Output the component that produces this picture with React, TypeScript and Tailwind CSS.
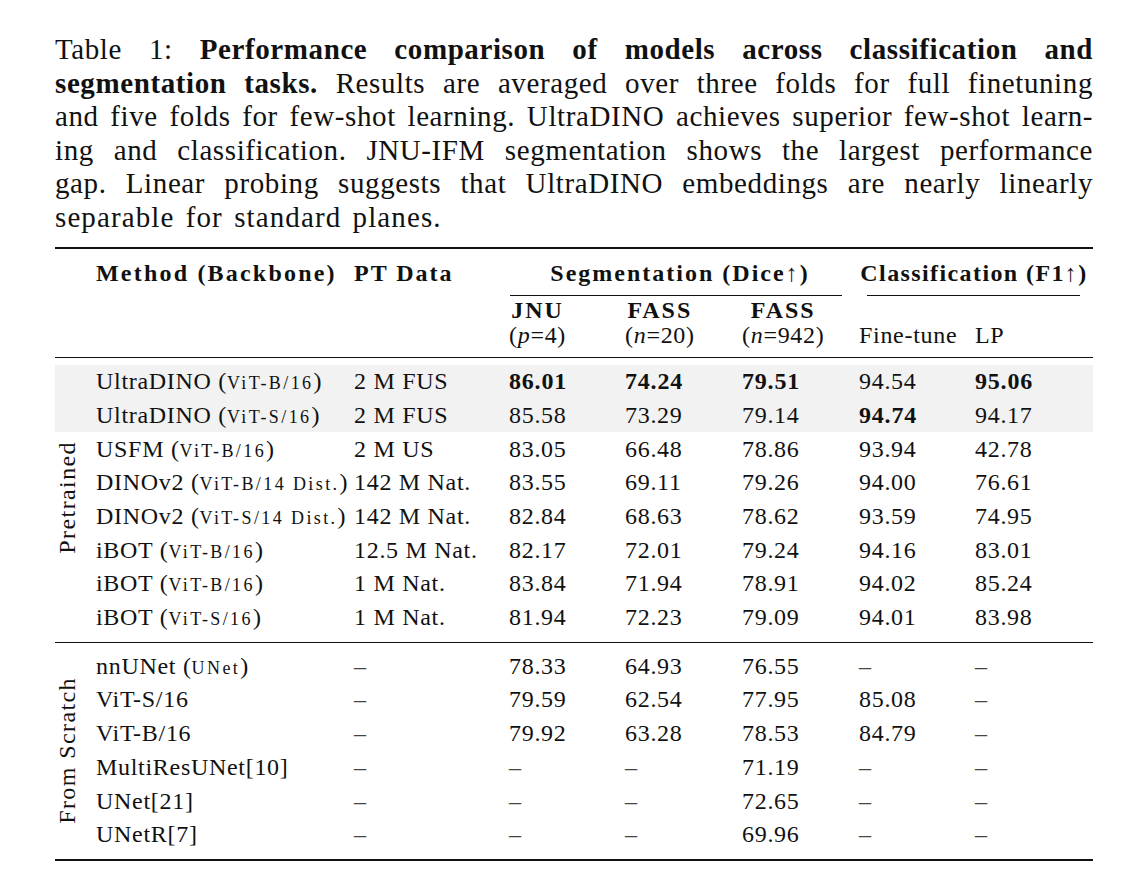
import React from "react";

const W = {
  method: "w-[258px]",
  pt: "w-[155px]",
  c1: "w-[116px]",
  c2: "w-[117px]",
  c3: "w-[117px]",
  c4: "w-[116px]",
  c5: "w-[118px]",
};

type Row = {
  name: string;
  arch?: string;
  pt: string;
  vals: string[]; // '*' suffix marks bold
};

const pretrained: Row[] = [
  { name: "UltraDINO", arch: "ViT-B/16", pt: "2 M FUS", vals: ["86.01*", "74.24*", "79.51*", "94.54", "95.06*"] },
  { name: "UltraDINO", arch: "ViT-S/16", pt: "2 M FUS", vals: ["85.58", "73.29", "79.14", "94.74*", "94.17"] },
  { name: "USFM", arch: "ViT-B/16", pt: "2 M US", vals: ["83.05", "66.48", "78.86", "93.94", "42.78"] },
  { name: "DINOv2", arch: "ViT-B/14 Dist.", pt: "142 M Nat.", vals: ["83.55", "69.11", "79.26", "94.00", "76.61"] },
  { name: "DINOv2", arch: "ViT-S/14 Dist.", pt: "142 M Nat.", vals: ["82.84", "68.63", "78.62", "93.59", "74.95"] },
  { name: "iBOT", arch: "ViT-B/16", pt: "12.5 M Nat.", vals: ["82.17", "72.01", "79.24", "94.16", "83.01"] },
  { name: "iBOT", arch: "ViT-B/16", pt: "1 M Nat.", vals: ["83.84", "71.94", "78.91", "94.02", "85.24"] },
  { name: "iBOT", arch: "ViT-S/16", pt: "1 M Nat.", vals: ["81.94", "72.23", "79.09", "94.01", "83.98"] },
];

const scratch: Row[] = [
  { name: "nnUNet", arch: "UNet", pt: "–", vals: ["78.33", "64.93", "76.55", "–", "–"] },
  { name: "ViT-S/16", pt: "–", vals: ["79.59", "62.54", "77.95", "85.08", "–"] },
  { name: "ViT-B/16", pt: "–", vals: ["79.92", "63.28", "78.53", "84.79", "–"] },
  { name: "MultiResUNet[10]", pt: "–", vals: ["–", "–", "71.19", "–", "–"] },
  { name: "UNet[21]", pt: "–", vals: ["–", "–", "72.65", "–", "–"] },
  { name: "UNetR[7]", pt: "–", vals: ["–", "–", "69.96", "–", "–"] },
];

const colW = [W.c1, W.c2, W.c3, W.c4, W.c5];

function Val({ v }: { v: string }) {
  const bold = v.endsWith("*");
  const t = bold ? v.slice(0, -1) : v;
  if (bold) return <span className="font-bold tracking-[0.8px]">{t}</span>;
  if (t === "–") return <span className="text-[#444]">{t}</span>;
  return <span>{t}</span>;
}

function DataRow({ r }: { r: Row }) {
  return (
    <div className="flex h-[33.7px] leading-[33.7px] whitespace-nowrap">
      <div className={`${W.method} shrink-0`}>
        {r.name}
        {r.arch ? (
          <>
            {" "}(<span className="text-[18px] tracking-[2.4px]">{r.arch}</span>)
          </>
        ) : null}
      </div>
      <div className={`${W.pt} shrink-0`}>{r.pt === "–" ? <span className="text-[#444]">–</span> : r.pt}</div>
      {r.vals.map((v, i) => (
        <div key={i} className={`${colW[i]} shrink-0`}>
          <Val v={v} />
        </div>
      ))}
    </div>
  );
}

function Caption() {
  const j = "text-justify [text-align-last:justify] whitespace-nowrap";
  return (
    <div className="text-[29px] leading-[33.6px] tracking-[0.6px]">
      <div className={j}>
        Table 1: <b className="tracking-[0.6px]">Performance comparison of models across classification and</b>
      </div>
      <div className={j}>
        <b className="tracking-[0.6px]">segmentation tasks.</b> Results are averaged over three folds for full finetuning
      </div>
      <div className={j}>and five folds for few-shot learning. UltraDINO achieves superior few-shot learn-</div>
      <div className={j}>ing and classification. JNU-IFM segmentation shows the largest performance</div>
      <div className={j}>gap. Linear probing suggests that UltraDINO embeddings are nearly linearly</div>
      <div className="tracking-[1.1px] [word-spacing:3px]">separable for standard planes.</div>
    </div>
  );
}

function Header() {
  const hb = "font-bold tracking-[2px] text-[24px]";
  return (
    <div className="border-t-2 border-[#111] pt-[8px]">
      <div className="flex">
        <div className="w-[41px] shrink-0" />
        <div className="flex-col">
          <div className="flex h-[33.7px] leading-[33.7px] whitespace-nowrap font-bold text-[24px]">
            <div className={`${W.method} shrink-0 tracking-[2.2px]`}>Method (Backbone)</div>
            <div className={`${W.pt} shrink-0 tracking-[2px]`}>PT Data</div>
            <div className="w-[350px] shrink-0 flex flex-col items-center tracking-[2px] pr-[8px]">
              <div>Segmentation (Dice↑)</div>
            </div>
            <div className="w-[234px] shrink-0 flex flex-col items-center tracking-[1.4px] pr-[4px]">
              <div>Classification (F1↑)</div>
            </div>
          </div>
          <div className="flex mt-[5px]">
            <div className="w-[413px] shrink-0" />
            <div className="w-[350px] shrink-0 pl-[1px] pr-[17px]">
              <div className="border-t border-[#111]" />
            </div>
            <div className="w-[234px] shrink-0 pl-[8px] pr-[13px]">
              <div className="border-t border-[#111]" />
            </div>
          </div>
          <div className="flex leading-[25px] mt-[2px] whitespace-nowrap">
            <div className="w-[413px] shrink-0" />
            <div className={`${W.c1} shrink-0`}>
              <div className="inline-flex flex-col items-center">
                <span className={hb}>JNU</span>
                <span>
                  (<i>p</i>=4)
                </span>
              </div>
            </div>
            <div className={`${W.c2} shrink-0`}>
              <div className="inline-flex flex-col items-center">
                <span className={hb}>FASS</span>
                <span>
                  (<i>n</i>=20)
                </span>
              </div>
            </div>
            <div className={`${W.c3} shrink-0`}>
              <div className="inline-flex flex-col items-center">
                <span className={hb}>FASS</span>
                <span>
                  (<i>n</i>=942)
                </span>
              </div>
            </div>
            <div className={`${W.c4} shrink-0 pt-[25px]`}>Fine-tune</div>
            <div className={`${W.c5} shrink-0 pt-[25px]`}>LP</div>
          </div>
        </div>
      </div>
      <div className="mt-[9px] border-t border-[#111]" />
    </div>
  );
}

function Group({ label, rows, gray, pt, labelPad }: { label: string; rows: Row[]; gray?: boolean; pt: string; labelPad: string }) {
  return (
    <div
      className={`flex ${pt} ${
        gray ? "bg-[linear-gradient(to_bottom,#f2f2f2_67.4px,transparent_67.4px)]" : ""
      }`}
    >
      <div className={`w-[41px] shrink-0 flex items-center ${labelPad}`}>
        <div className="[writing-mode:vertical-rl] rotate-180 leading-[24px] whitespace-nowrap tracking-[1.4px]">{label}</div>
      </div>
      <div className="flex flex-col">
        {rows.map((r, i) => (
          <DataRow key={i} r={r} />
        ))}
      </div>
    </div>
  );
}

export default function App() {
  return (
    <div className="w-[1148px] h-[891px] bg-white text-[#111] font-['Liberation_Serif',serif] px-[55px] pt-[33px]">
      <Caption />
      <div className="mt-[12px] text-[24px] tracking-[0.7px]">
        <Header />
        <div className="pt-[7px]">
          <Group label="Pretrained" rows={pretrained} gray pt="" labelPad="pl-[0px] pb-[6px]" />
        </div>
        <div className="mt-[7px] border-t border-[#111]" />
        <Group label="From Scratch" rows={scratch} pt="pt-[7px]" labelPad="pl-[0px]" />
        <div className="mt-[7px] border-t-2 border-[#111]" />
      </div>
    </div>
  );
}
